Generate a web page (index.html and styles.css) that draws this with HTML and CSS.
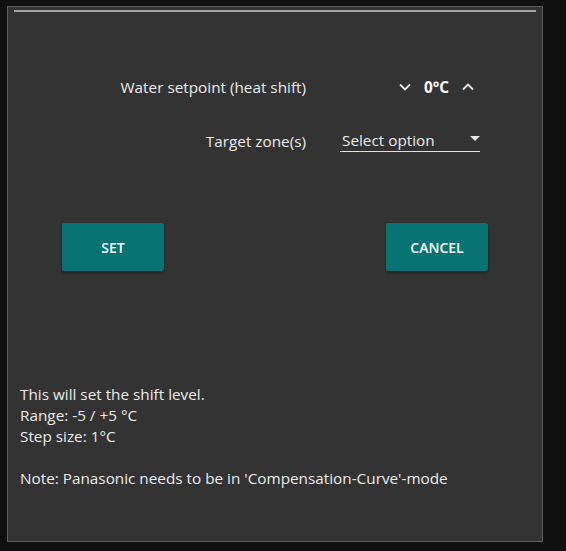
FILE: index.html
```html
<!DOCTYPE html>
<html lang="en">
<head>
<meta charset="utf-8">
<title>Water setpoint</title>
<link rel="stylesheet" href="styles.css">
</head>
<body>
<div class="panel">
  <div class="progress"></div>
  <div class="form">
    <div class="label">Water setpoint (heat shift)</div>
    <div class="stepper">
      <span class="chev">
        <svg width="12" height="8" viewBox="0 0 12 8"><path d="M1 1.5 L6 6.5 L11 1.5" fill="none" stroke="#e6e6e6" stroke-width="1.8"/></svg>
      </span>
      <span class="value">0°C</span>
      <span class="chev">
        <svg width="12" height="8" viewBox="0 0 12 8"><path d="M1 6.5 L6 1.5 L11 6.5" fill="none" stroke="#e6e6e6" stroke-width="1.8"/></svg>
      </span>
    </div>
    <div class="label">Target zone(s)</div>
    <div class="select">
      <span class="select-text">Select option</span>
      <svg class="caret" width="10" height="6" viewBox="0 0 10 6"><path d="M0 0 L10 0 L5 5 Z" fill="#e6e6e6"/></svg>
    </div>
  </div>
  <div class="buttons">
    <button class="btn">SET</button>
    <button class="btn">CANCEL</button>
  </div>
  <div class="info">
    <div>This will set the shift level.</div>
    <div>Range: -5 / +5 °C</div>
    <div>Step size: 1°C</div>
    <div class="blank"></div>
    <div>Note: Panasonic needs to be in 'Compensation-Curve'-mode</div>
  </div>
</div>
</body>
</html>
```
FILE: styles.css
```css
html, body {
  margin: 0;
  padding: 0;
  background: #101010;
}
body {
  font-family: "Open Sans", "Noto Sans", sans-serif;
  color: #ebebeb;
  font-size: 15.3px;
}
.panel {
  box-sizing: border-box;
  margin: 6px 0 0 7px;
  width: 536px;
  height: 536px;
  background: #333333;
  border: 1px solid #5e5e5e;
}
.progress {
  height: 2px;
  margin: 3px 6px 0 6px;
  background: #a4a4a4;
}
.form {
  display: grid;
  grid-template-columns: 298px 140px;
  column-gap: 34px;
  row-gap: 14px;
  margin-top: 55px;
}
.label {
  text-align: right;
  line-height: 40px;
  height: 40px;
}
.stepper {
  display: flex;
  align-items: center;
  justify-content: flex-end;
  height: 40px;
  padding-right: 6px;
}
.chev {
  display: flex;
  align-items: center;
  justify-content: center;
  width: 12px;
  height: 8px;
}
.value {
  font-weight: 700;
  color: #ffffff;
  margin: 0 13px 0 13px;
}
.select {
  display: flex;
  align-items: center;
  justify-content: space-between;
  box-sizing: border-box;
  height: 30px;
  padding: 6px 0 0 2px;
  border-bottom: 1px solid #e0e0e0;
  align-self: end;
  margin-bottom: 9px;
}
.select-text {
  line-height: 20px;
}
.caret {
  margin-top: -2px;
}
.buttons {
  display: flex;
  justify-content: space-between;
  padding: 0 54px 0 54px;
  margin-top: 62px;
}
.btn {
  width: 102px;
  height: 48px;
  border: none;
  border-radius: 2px;
  background: #077373;
  color: #ffffff;
  font-family: "Open Sans", "Noto Sans", sans-serif;
  font-weight: 600;
  font-size: 14px;
  letter-spacing: 0;
  box-shadow: 0 2px 3px rgba(0, 0, 0, 0.35);
  padding: 0;
}
.info {
  margin-top: 113px;
  padding-left: 12px;
  line-height: 21px;
}
.blank {
  height: 21px;
}
```
